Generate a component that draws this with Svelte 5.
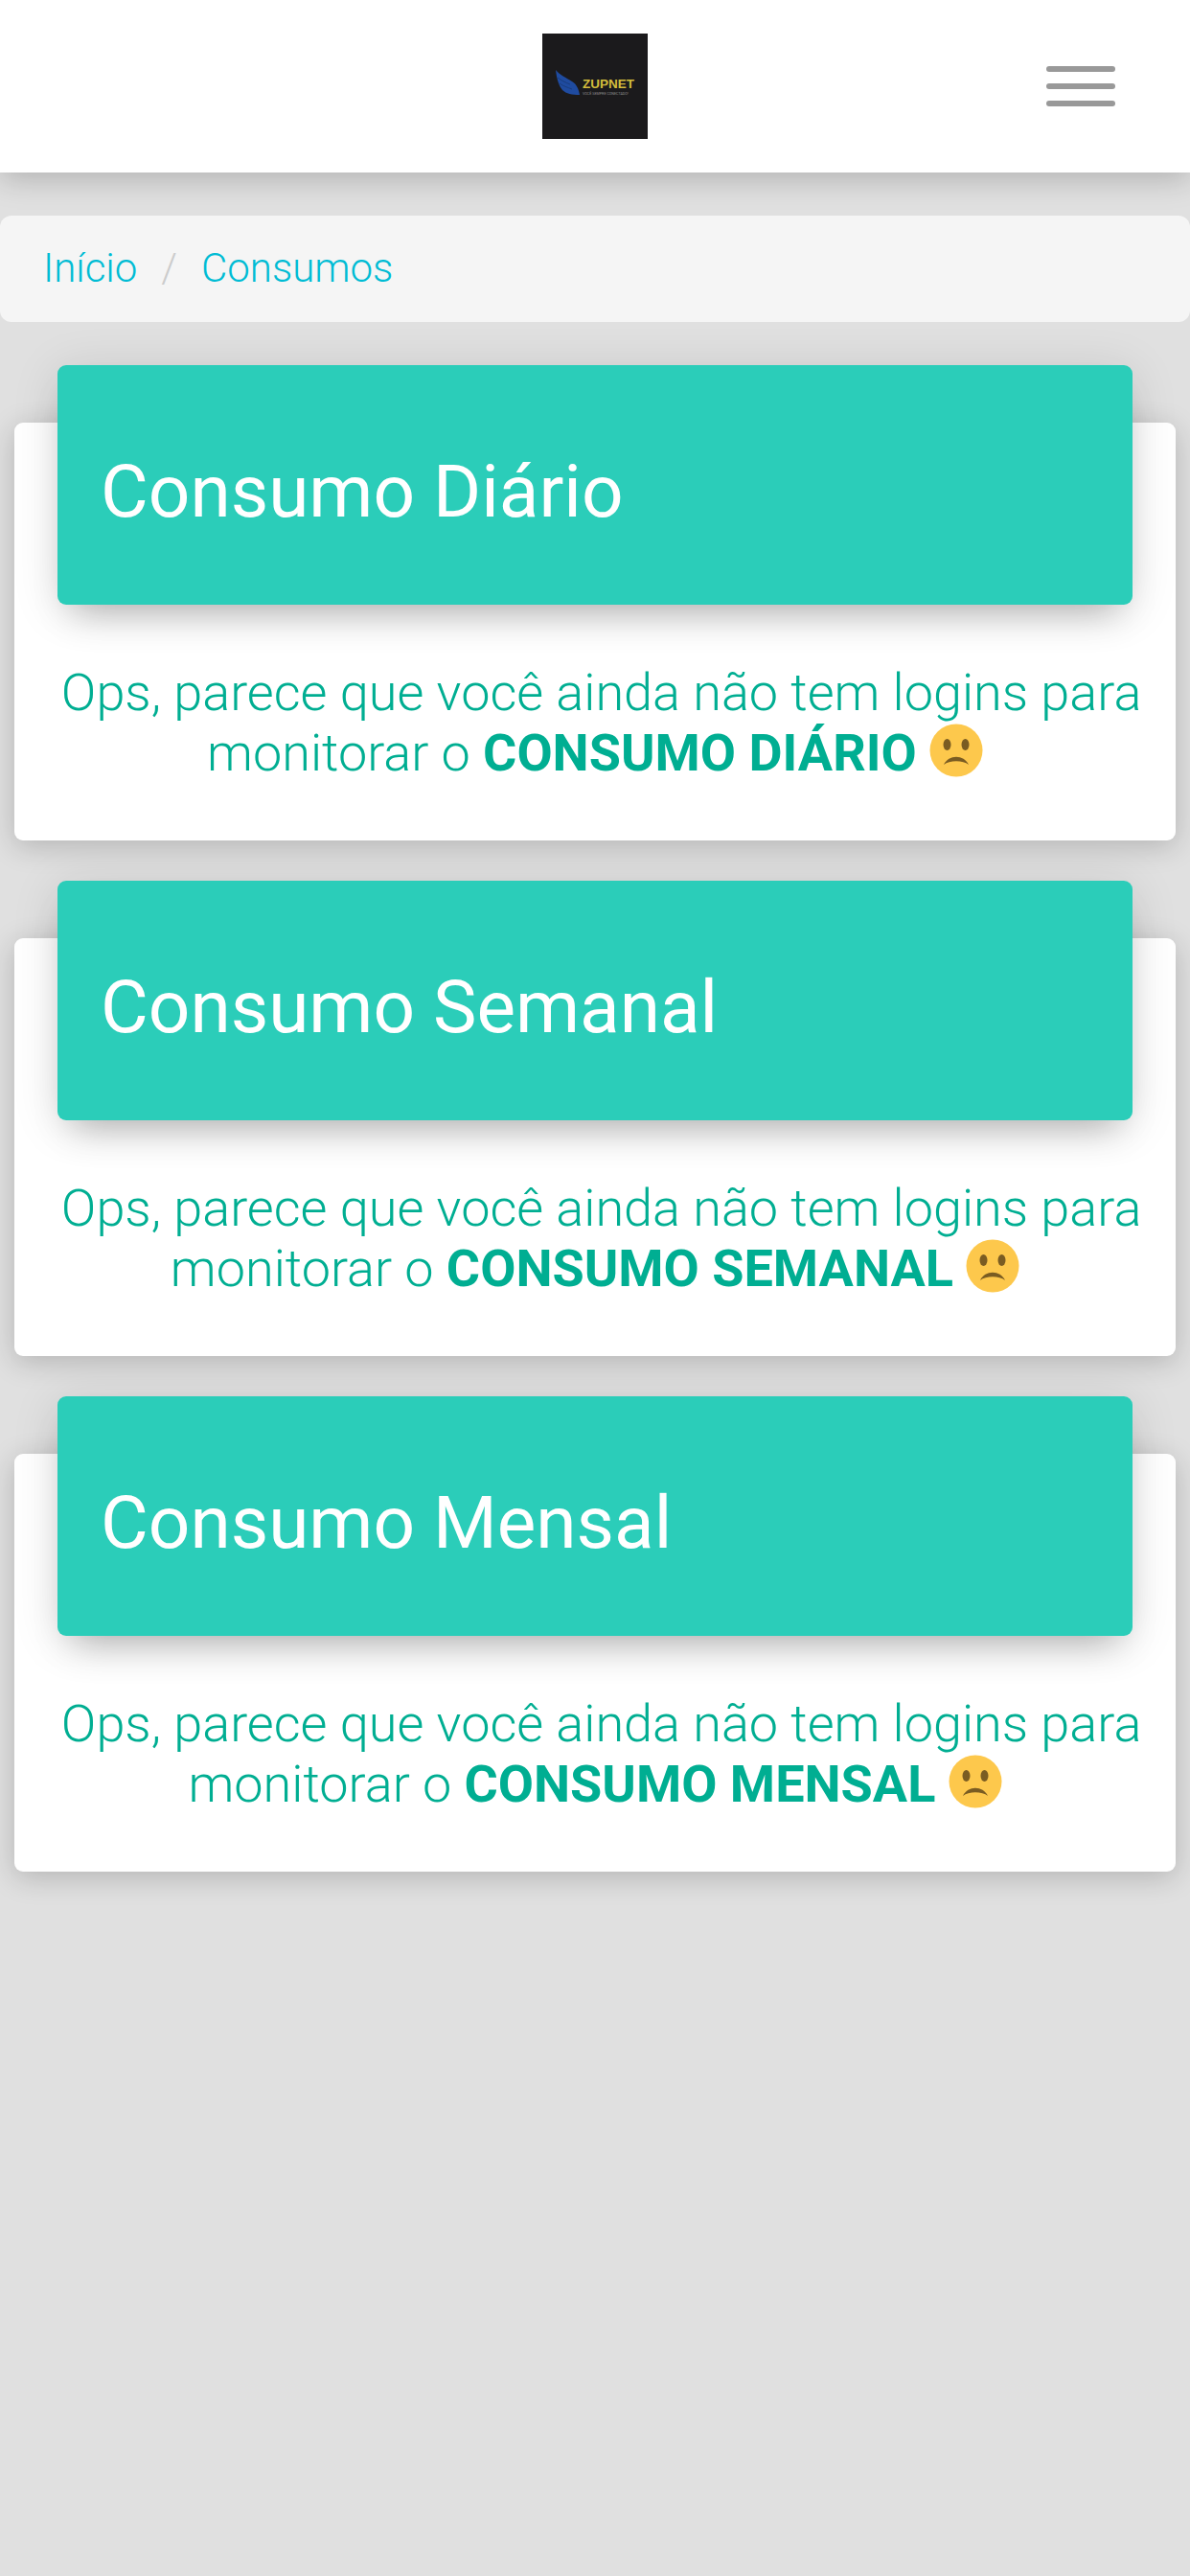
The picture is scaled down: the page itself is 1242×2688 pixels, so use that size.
<script>
	let sections = [
	  { title: 'Consumo Diário', label: 'CONSUMO DIÁRIO' },
	  { title: 'Consumo Semanal', label: 'CONSUMO SEMANAL' },
	  { title: 'Consumo Mensal', label: 'CONSUMO MENSAL' },
	];
</script>

<main>
	<nav class="navbar">
	  <div class="logo">
		<svg class="wing" viewBox="0 0 25 26" width="25" height="26">
		  <path d="M0 0 C4 5 11 8 17 12 C22 15 24 20 25 26 C17 26 11 25 7 21 C3 16 1 9 0 0 Z" fill="#1f4ba0" />
		  <path d="M2 8 C6 11 10 13 15 15 M4 14 C8 17 12 18 17 20" fill="none" stroke="#17376f" stroke-width="0.7" />
		</svg>
		<div class="brand">
		  <div class="brand-name">ZUPNET</div>
		  <div class="brand-sub">VOCÊ SEMPRE CONECTADO!</div>
		</div>
	  </div>
	  <button class="toggle" aria-label="Menu">
		<span></span>
		<span></span>
		<span></span>
	  </button>
	</nav>

	<ol class="breadcrumb">
	  <li><a href="#inicio">Início</a></li>
	  <li class="sep">/</li>
	  <li><a href="#consumos">Consumos</a></li>
	</ol>

	<div class="cards">
	  {#each sections as section}
		<section class="card">
		  <header class="card-header">
			<h4>{section.title}</h4>
		  </header>
		  <p class="empty">
			&nbsp;Ops, parece que você ainda não tem logins para monitorar o <strong>{section.label}</strong>
			<svg class="sad" viewBox="0 0 56 56" width="56" height="56">
			  <circle cx="28" cy="28" r="27.5" fill="#fdc84c" />
			  <ellipse cx="18.5" cy="22" rx="4" ry="6" fill="#7a5c22" />
			  <ellipse cx="37.5" cy="22" rx="4" ry="6" fill="#7a5c22" />
			  <path d="M15 43 C20 32 36 32 41 43 C35 38 21 38 15 43 Z" fill="#7a5c22" />
			</svg>
		  </p>
		</section>
	  {/each}
	</div>
</main>

<style>
	:global(body) {
	  margin: 0;
	  background: #e0e0e0;
	  font-family: Roboto, "Liberation Sans", sans-serif;
	}

	main {
	  min-height: 2688px;
	}

	.navbar {
	  height: 180px;
	  background: #fff;
	  box-shadow: 0 6px 30px rgba(0, 0, 0, 0.22);
	  display: flex;
	  align-items: center;
	  justify-content: center;
	  position: relative;
	}

	.logo {
	  width: 110px;
	  height: 110px;
	  background: #1b1a1c;
	  display: flex;
	  align-items: flex-end;
	  justify-content: center;
	  gap: 3px;
	  box-sizing: border-box;
	  padding-bottom: 46px;
	}

	.brand {
	  margin-bottom: -2px;
	}

	.brand-name {
	  color: #d4bd3c;
	  font-size: 13.5px;
	  font-weight: 700;
	  line-height: 14px;
	  font-family: "Liberation Sans", sans-serif;
	}

	.brand-sub {
	  color: #8d8d8d;
	  font-size: 3.7px;
	  line-height: 6px;
	  white-space: nowrap;
	}

	.toggle {
	  position: absolute;
	  top: 69px;
	  right: 78px;
	  width: 72px;
	  padding: 0;
	  border: 0;
	  background: none;
	  display: flex;
	  flex-direction: column;
	  gap: 12px;
	}

	.toggle span {
	  height: 6px;
	  border-radius: 3px;
	  background: #999;
	}

	.breadcrumb {
	  list-style: none;
	  margin: 45px 0 0;
	  padding: 0 45px 2px;
	  box-sizing: border-box;
	  height: 111px;
	  background: #f5f5f5;
	  border-radius: 12px;
	  display: flex;
	  align-items: center;
	  gap: 25px;
	  font-size: 42px;
	  font-weight: 300;
	}

	.breadcrumb a {
	  color: #00bcd4;
	  text-decoration: none;
	}

	.sep {
	  color: #ccc;
	}

	.cards {
	  padding-top: 105px;
	  display: flex;
	  flex-direction: column;
	  gap: 102px;
	}

	.card {
	  margin: 0 15px;
	  background: #fff;
	  border-radius: 9px;
	  box-shadow: 0 6px 30px rgba(0, 0, 0, 0.2);
	  height: 436px;
	}

	.card-header {
	  position: relative;
	  top: -60px;
	  margin: 0 45px;
	  height: 250px;
	  background: #2bcdb9;
	  border-radius: 9px;
	  box-shadow: 0 22px 36px -16px rgba(0, 0, 0, 0.26), 0 6px 50px rgba(0, 0, 0, 0.12);
	  display: flex;
	  align-items: center;
	  padding: 0 45px;
	}

	h4 {
	  margin: 13px 0 0;
	  font-size: 76.5px;
	  font-weight: 400;
	  color: #fff;
	}

	.empty {
	  margin: 0;
	  padding: 0 30px;
	  text-align: center;
	  color: #00ae92;
	  font-size: 54px;
	  font-weight: 300;
	  line-height: 63px;
	}

	.empty strong {
	  font-weight: 700;
	}

	.sad {
	  vertical-align: -7px;
	}
</style>
